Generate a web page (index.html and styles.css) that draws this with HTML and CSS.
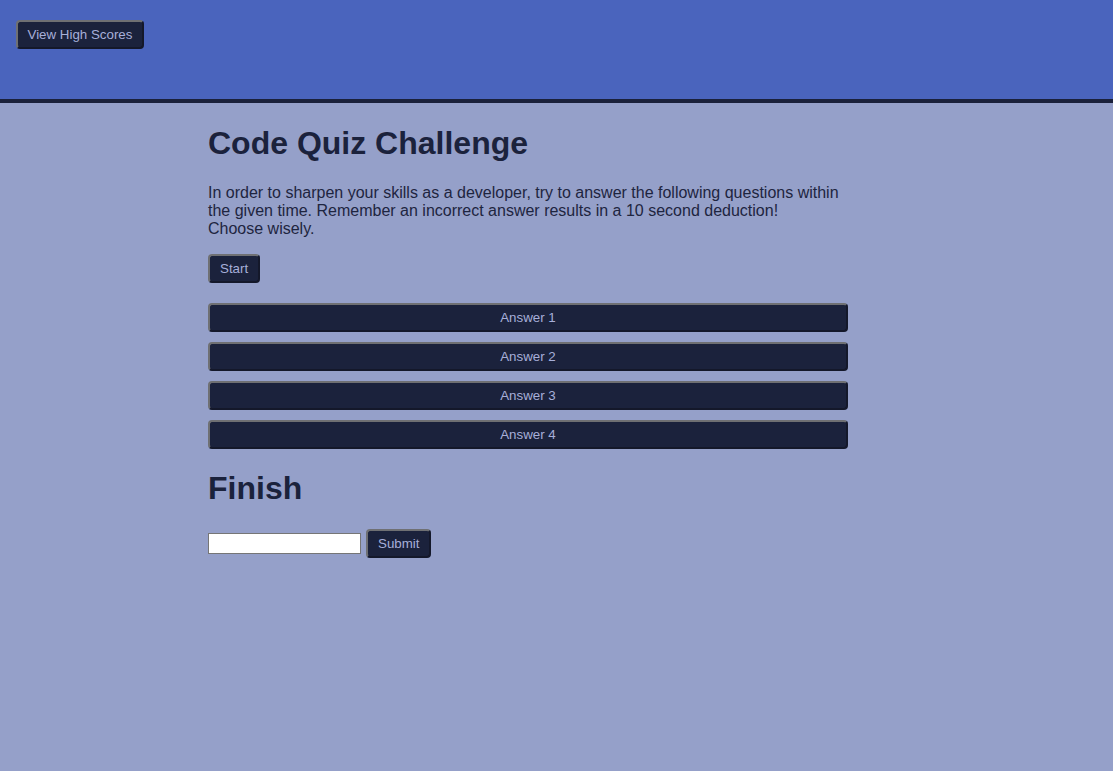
FILE: index.html
```html
<!DOCTYPE html>
<html lang="en">
<head>
<meta charset="utf-8">
<title>Code Quiz</title>
<link rel="stylesheet" href="styles.css">
</head>
<body>
<header class="top-bar">
  <button class="btn btn-nav">View High Scores</button>
</header>
<main class="container">
  <h1 class="title">Code Quiz Challenge</h1>
  <p class="intro">In order to sharpen your skills as a developer, try to answer the following questions within the given time. Remember an incorrect answer results in a 10 second deduction!<br>Choose wisely.</p>
  <div class="start-row"><button class="btn">Start</button></div>
  <div class="answers">
    <button class="btn answer">Answer 1</button>
    <button class="btn answer">Answer 2</button>
    <button class="btn answer">Answer 3</button>
    <button class="btn answer">Answer 4</button>
  </div>
  <h1 class="title title-finish">Finish</h1>
  <form class="finish-form">
    <input class="initials" type="text">
    <button class="btn" type="button">Submit</button>
  </form>
</main>
</body>
</html>
```
FILE: styles.css
```css
html, body {
  margin: 0;
  padding: 0;
}
body {
  background: #95a0c9;
  font-family: "Liberation Sans", Arial, sans-serif;
  color: #1b223c;
  min-height: 771px;
}
.top-bar {
  background: #4a64bd;
  border-bottom: 4px solid #1b213b;
  padding: 20px 0 0 16px;
  box-sizing: border-box;
  height: 103px;
}
.btn {
  font-family: "Liberation Sans", Arial, sans-serif;
  font-size: 13.33px;
  line-height: 15px;
  color: #a7afd9;
  background: #1b223c;
  border: 2px solid;
  border-color: #6f7073 #14182a #14182a #6f7073;
  border-radius: 4px;
  padding: 5px 10px;
  cursor: pointer;
}
.btn-nav {
  padding: 5px 9.5px;
}
.container {
  width: 640px;
  margin-left: 208px;
  padding-top: 0.1px;
}
.title {
  font-size: 32px;
  font-weight: bold;
  margin: 22px 0;
  line-height: 37px;
}
.title-finish {
  margin-top: 21px;
}
.intro {
  font-size: 16px;
  line-height: 18px;
  margin: 0 0 16px;
  color: #1e2540;
}
.start-row {
  display: flex;
}
.answers {
  display: flex;
  flex-direction: column;
  gap: 10px;
  margin-top: 20px;
}
.answer {
  width: 100%;
}
.finish-form {
  display: flex;
  align-items: center;
  gap: 5px;
  margin-top: 22px;
}
.initials {
  box-sizing: border-box;
  width: 153px;
  height: 21px;
  border: 1px solid #767676;
  padding: 1px 2px;
  background: #fff;
  font-size: 13.33px;
  margin: 0;
}
```
